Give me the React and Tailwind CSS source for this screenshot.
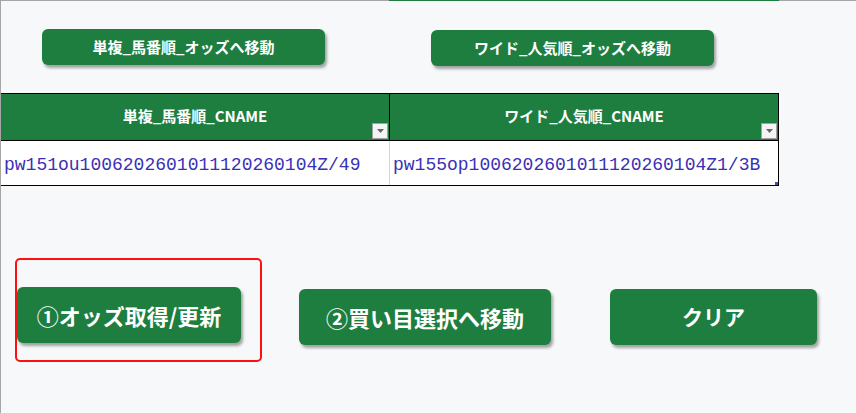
const jp = { fontFamily: '"Noto Sans CJK JP", "Noto Sans", sans-serif' };

function GreenButton({ label, className }) {
  return (
    <button
      style={jp}
      className={`flex items-center justify-center rounded-[6px] bg-[#1e7e3f] font-bold text-white shadow-[2px_3px_3px_rgba(0,0,0,0.35)] ${className}`}
    >
      {label}
    </button>
  );
}

function FilterButton() {
  return (
    <span className="absolute right-[1px] bottom-[1px] flex h-[16px] w-[16px] items-center justify-center border border-[#a0a0a0] bg-[#f4f4f4]">
      <svg width="7" height="4" viewBox="0 0 7 4"><path d="M0 0h7L3.5 4z" fill="#666" /></svg>
    </span>
  );
}

export default function App() {
  const cols = [
    ['単複_馬番順_CNAME', 'pw151ou1006202601011120260104Z/49'],
    ['ワイド_人気順_CNAME', 'pw155op1006202601011120260104Z1/3B'],
  ];
  return (
    <div className="flex h-[413px] w-[856px] flex-col overflow-hidden border-l border-[#a6a6a6] bg-[#f7f8fa]">
      <div className="flex h-px">
        <div className="w-[388px] bg-[#a6a6a6]" />
        <div className="w-[390px] bg-[#1e7e3f]" />
        <div className="flex-1 bg-[#a6a6a6]" />
      </div>

      <div className="mt-[28px] flex">
        <GreenButton label="単複_馬番順_オッズへ移動" className="ml-[41px] h-[36px] w-[283px] text-[15px]" />
        <GreenButton label="ワイド_人気順_オッズへ移動" className="mt-px ml-[106px] h-[36px] w-[283px] text-[15px]" />
      </div>

      <div className="relative mt-[27px] w-[778px] border-y border-r border-black">
        <div className="flex h-[46px] bg-[#1e7e3f]">
          {cols.map(([h], i) => (
            <div
              key={h}
              style={jp}
              className={`relative flex flex-1 items-center justify-center pb-[2px] text-[15px] font-bold text-white ${i === 0 ? 'border-r border-black' : ''}`}
            >
              {h}
              <FilterButton />
            </div>
          ))}
        </div>
        <div className="flex h-[45px] border-t border-black bg-white">
          {cols.map(([h, v], i) => (
            <div
              key={h}
              style={{ fontFamily: '"Liberation Mono", monospace' }}
              className={`flex flex-1 items-center pl-[3px] pt-[4px] text-[18px] text-[#3a30b6] ${i === 0 ? 'border-r border-[#d4d4d4]' : ''}`}
            >
              {v}
            </div>
          ))}
        </div>
        <span className="absolute right-0 bottom-0 h-[3px] w-[3px] bg-[#3a4fb0]" />
      </div>

      <div className="mt-[72px] flex items-start">
        <div className="ml-[14px] h-[104px] w-[247px] rounded-[5px] border-2 border-[#ff1010] pt-[27px]">
          <GreenButton label="①オッズ取得/更新" className="h-[56px] w-[224px] text-[22px]" />
        </div>
        <GreenButton label="②買い目選択へ移動" className="mt-[31px] ml-[37px] h-[56px] w-[252px] text-[22px]" />
        <GreenButton label="クリア" className="mt-[31px] ml-[59px] h-[56px] w-[207px] text-[21px]" />
      </div>
    </div>
  );
}
